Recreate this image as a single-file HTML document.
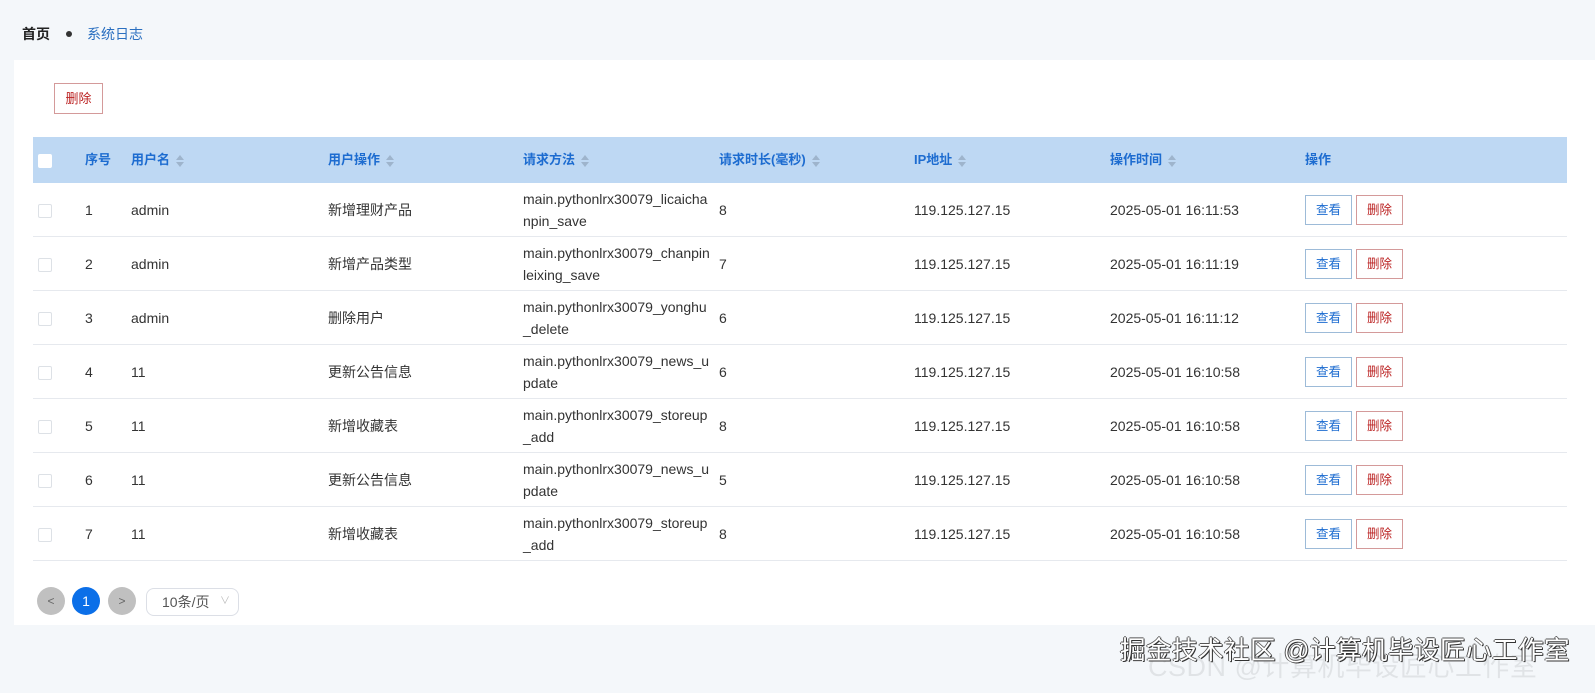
<!DOCTYPE html>
<html><head><meta charset="utf-8"><style>
body{margin:0;width:1595px;height:693px;background:#f4f7fa;font-family:"Liberation Sans","Noto Sans CJK SC",sans-serif;position:relative;overflow:hidden;color:#333}
.bc{position:absolute;top:24px;left:22px;font-size:14px}
.bc b{color:#222}
.bc .dot{display:inline-block;width:6px;height:6px;border-radius:50%;background:#333;margin:0 15px 2px 16px}
.bc span.l{color:#2a6fc0}
.card{position:absolute;left:14px;top:60px;width:1581px;height:565px;background:#fff}
.del{position:absolute;left:54px;top:83px;width:47px;height:29px;border:1px solid #d49a9a;color:#b22;font-size:13px;line-height:29px;text-align:center;box-sizing:content-box}
.tbl{position:absolute;left:33px;top:137px;width:1534px}
.hd{height:46px;background:#bed8f3;position:relative;font-weight:bold;color:#1d6cd0;font-size:13px}
.row{height:53px;border-bottom:1px solid #e6e9ee;position:relative;font-size:14px;color:#333}
.c{position:absolute;top:50%;transform:translateY(-50%);line-height:22px}
.cb{position:absolute;left:5px;top:50%;margin-top:-6px;width:12px;height:12px;border:1px solid #dde1e6;background:#fff;border-radius:2px}
.hd .cb{border-color:#fff}
.ar{display:inline-block;vertical-align:middle;margin-left:6px;width:8px;height:12px;position:relative}
.ar:before,.ar:after{content:"";position:absolute;left:0;border-left:4px solid transparent;border-right:4px solid transparent}
.ar:before{top:0;border-bottom:5px solid #9eb4cc}.ar:after{bottom:0;border-top:5px solid #9eb4cc}
.b{position:absolute;top:50%;margin-top:-15px;width:45px;height:28px;font-size:12.5px;line-height:28px;text-align:center}
.bv{left:1272px;border:1px solid #9dbbd8;color:#1d6cd0}
.bd{left:1323px;border:1px solid #d49a9a;color:#b22}
.pg{position:absolute;top:587px;width:28px;height:28px;border-radius:50%;background:#c0c0c0;color:#666;font-size:12px;line-height:28px;text-align:center}
.wm{position:absolute;left:1120px;top:630px;font-size:25.5px;color:#fff;text-shadow:1px 1px 0 #333,-1px 0 0 #555,0 -1px 0 #555,1px 0 0 #555;letter-spacing:0.5px}
.wm2{position:absolute;left:1148px;top:645px;font-size:27px;color:rgba(0,0,0,0.08);letter-spacing:0.5px}
</style></head><body>
<div class="bc"><b>首页</b><span class="dot"></span><span class="l">系统日志</span></div>
<div class="card"></div>
<div class="del">删除</div>
<div class="tbl">
<div class="hd"><div class="cb"></div>
<div class="c" style="left:52px">序号</div>
<div class="c" style="left:98px">用户名<i class="ar"></i></div>
<div class="c" style="left:295px">用户操作<i class="ar"></i></div>
<div class="c" style="left:490px">请求方法<i class="ar"></i></div>
<div class="c" style="left:686px">请求时长(毫秒)<i class="ar"></i></div>
<div class="c" style="left:881px">IP地址<i class="ar"></i></div>
<div class="c" style="left:1077px">操作时间<i class="ar"></i></div>
<div class="c" style="left:1272px">操作</div>
</div>
<div class="row"><div class="cb"></div><div class="c" style="left:52px">1</div><div class="c" style="left:98px">admin</div><div class="c" style="left:295px">新增理财产品</div><div class="c" style="left:490px">main.pythonlrx30079_licaicha<br>npin_save</div><div class="c" style="left:686px">8</div><div class="c" style="left:881px">119.125.127.15</div><div class="c" style="left:1077px">2025-05-01 16:11:53</div><div class="b bv">查看</div><div class="b bd">删除</div></div>
<div class="row"><div class="cb"></div><div class="c" style="left:52px">2</div><div class="c" style="left:98px">admin</div><div class="c" style="left:295px">新增产品类型</div><div class="c" style="left:490px">main.pythonlrx30079_chanpin<br>leixing_save</div><div class="c" style="left:686px">7</div><div class="c" style="left:881px">119.125.127.15</div><div class="c" style="left:1077px">2025-05-01 16:11:19</div><div class="b bv">查看</div><div class="b bd">删除</div></div>
<div class="row"><div class="cb"></div><div class="c" style="left:52px">3</div><div class="c" style="left:98px">admin</div><div class="c" style="left:295px">删除用户</div><div class="c" style="left:490px">main.pythonlrx30079_yonghu<br>_delete</div><div class="c" style="left:686px">6</div><div class="c" style="left:881px">119.125.127.15</div><div class="c" style="left:1077px">2025-05-01 16:11:12</div><div class="b bv">查看</div><div class="b bd">删除</div></div>
<div class="row"><div class="cb"></div><div class="c" style="left:52px">4</div><div class="c" style="left:98px">11</div><div class="c" style="left:295px">更新公告信息</div><div class="c" style="left:490px">main.pythonlrx30079_news_u<br>pdate</div><div class="c" style="left:686px">6</div><div class="c" style="left:881px">119.125.127.15</div><div class="c" style="left:1077px">2025-05-01 16:10:58</div><div class="b bv">查看</div><div class="b bd">删除</div></div>
<div class="row"><div class="cb"></div><div class="c" style="left:52px">5</div><div class="c" style="left:98px">11</div><div class="c" style="left:295px">新增收藏表</div><div class="c" style="left:490px">main.pythonlrx30079_storeup<br>_add</div><div class="c" style="left:686px">8</div><div class="c" style="left:881px">119.125.127.15</div><div class="c" style="left:1077px">2025-05-01 16:10:58</div><div class="b bv">查看</div><div class="b bd">删除</div></div>
<div class="row"><div class="cb"></div><div class="c" style="left:52px">6</div><div class="c" style="left:98px">11</div><div class="c" style="left:295px">更新公告信息</div><div class="c" style="left:490px">main.pythonlrx30079_news_u<br>pdate</div><div class="c" style="left:686px">5</div><div class="c" style="left:881px">119.125.127.15</div><div class="c" style="left:1077px">2025-05-01 16:10:58</div><div class="b bv">查看</div><div class="b bd">删除</div></div>
<div class="row"><div class="cb"></div><div class="c" style="left:52px">7</div><div class="c" style="left:98px">11</div><div class="c" style="left:295px">新增收藏表</div><div class="c" style="left:490px">main.pythonlrx30079_storeup<br>_add</div><div class="c" style="left:686px">8</div><div class="c" style="left:881px">119.125.127.15</div><div class="c" style="left:1077px">2025-05-01 16:10:58</div><div class="b bv">查看</div><div class="b bd">删除</div></div>
</div>
<div class="pg" style="left:37px">&lt;</div>
<div class="pg" style="left:72px;background:#0b6fe8;color:#fff;font-size:14px">1</div>
<div class="pg" style="left:108px">&gt;</div>
<div style="position:absolute;left:146px;top:588px;width:91px;height:26px;border:1px solid #dcdfe6;border-radius:8px;font-size:14px;line-height:26px;color:#555"><span style="margin-left:15px">10条/页</span><span style="position:absolute;right:8px;top:0;color:#bbb;font-size:10px">&#8744;</span></div>
<div class="wm2">CSDN @计算机毕设匠心工作室</div>
<div class="wm">掘金技术社区 @计算机毕设匠心工作室</div>
</body></html>
